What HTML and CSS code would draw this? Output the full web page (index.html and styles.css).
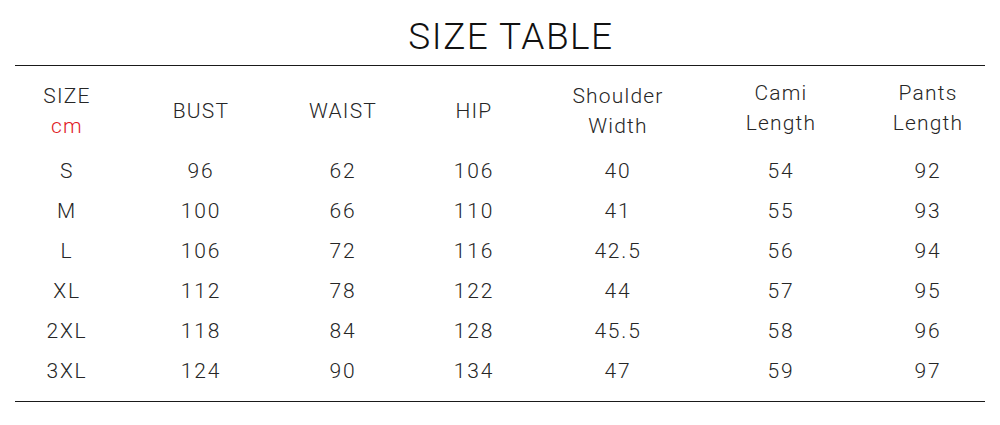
FILE: index.html
```html
<!DOCTYPE html>
<html>
<head>
<meta charset="utf-8">
<link rel="stylesheet" href="styles.css">
</head>
<body>
<div class="page">
  <h1 class="title">SIZE TABLE</h1>
  <div class="table">
    <div class="row head">
      <div class="cell"><span>SIZE</span><span class="unit">cm</span></div>
      <div class="cell">BUST</div>
      <div class="cell">WAIST</div>
      <div class="cell">HIP</div>
      <div class="cell"><span>Shoulder</span><span>Width</span></div>
      <div class="cell up"><span>Cami</span><span>Length</span></div>
      <div class="cell up"><span>Pants</span><span>Length</span></div>
    </div>
    <div class="row"><div class="cell">S</div><div class="cell">96</div><div class="cell">62</div><div class="cell">106</div><div class="cell">40</div><div class="cell">54</div><div class="cell">92</div></div>
    <div class="row"><div class="cell">M</div><div class="cell">100</div><div class="cell">66</div><div class="cell">110</div><div class="cell">41</div><div class="cell">55</div><div class="cell">93</div></div>
    <div class="row"><div class="cell">L</div><div class="cell">106</div><div class="cell">72</div><div class="cell">116</div><div class="cell">42.5</div><div class="cell">56</div><div class="cell">94</div></div>
    <div class="row"><div class="cell">XL</div><div class="cell">112</div><div class="cell">78</div><div class="cell">122</div><div class="cell">44</div><div class="cell">57</div><div class="cell">95</div></div>
    <div class="row"><div class="cell">2XL</div><div class="cell">118</div><div class="cell">84</div><div class="cell">128</div><div class="cell">45.5</div><div class="cell">58</div><div class="cell">96</div></div>
    <div class="row"><div class="cell">3XL</div><div class="cell">124</div><div class="cell">90</div><div class="cell">134</div><div class="cell">47</div><div class="cell">59</div><div class="cell">97</div></div>
  </div>
</div>
</body>
</html>
```
FILE: styles.css
```css
html, body {
  margin: 0;
  padding: 0;
  background: #ffffff;
}
.page {
  width: 1000px;
  height: 425px;
  font-family: Roboto, "Liberation Sans", sans-serif;
  color: #262626;
}
.title {
  margin: 0 15px;
  height: 66px;
  border-bottom: 1.5px solid #1a1a1a;
  box-sizing: border-box;
  display: flex;
  align-items: flex-end;
  justify-content: center;
  padding-bottom: 10px;
  padding-left: 22px;
  font-size: 37px;
  line-height: 37px;
  font-weight: 300;
  letter-spacing: 1.5px;
  color: #111;
}
.table {
  margin: 0 15px;
  border-bottom: 1.5px solid #1a1a1a;
  padding-bottom: 10px;
}
.row {
  display: grid;
  grid-template-columns: 104px 164px 120px 142px 146px 180px 1fr;
  height: 40px;
  align-items: center;
}
.row.head {
  height: 85px;
  padding-top: 4px;
  box-sizing: border-box;
}
.cell {
  display: flex;
  flex-direction: column;
  align-items: center;
  justify-content: center;
  font-size: 21px;
  line-height: 30px;
  font-weight: 300;
  letter-spacing: 1.8px;
  text-align: center;
}
.head .cell {
  letter-spacing: 1.2px;
}
.head .cell.up {
  margin-top: -6px;
}
.unit {
  color: #e0191f;
}
```
